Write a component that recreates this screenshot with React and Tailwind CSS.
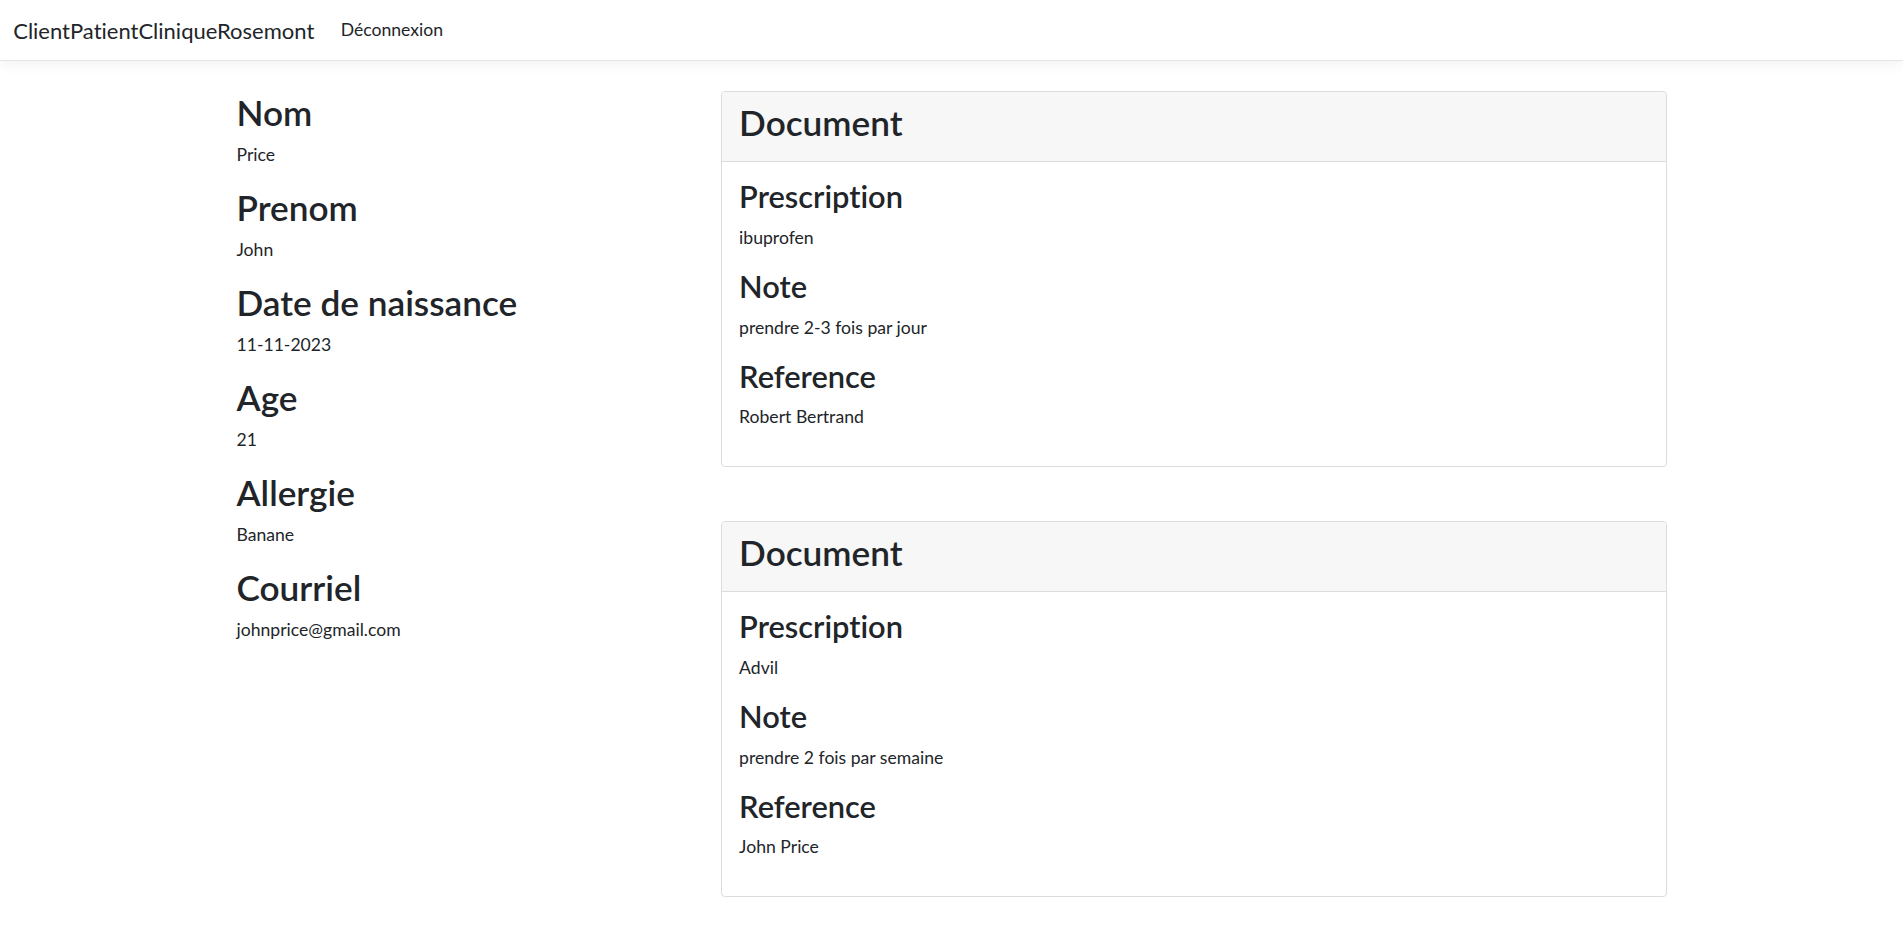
import React from 'react';

const patient = [
  { label: 'Nom', value: 'Price' },
  { label: 'Prenom', value: 'John' },
  { label: 'Date de naissance', value: '11-11-2023' },
  { label: 'Age', value: '21' },
  { label: 'Allergie', value: 'Banane' },
  { label: 'Courriel', value: 'johnprice@gmail.com' },
];

const documents = [
  { prescription: 'ibuprofen', note: 'prendre 2-3 fois par jour', reference: 'Robert Bertrand' },
  { prescription: 'Advil', note: 'prendre 2 fois par semaine', reference: 'John Price' },
];

const DocumentCard = ({ doc }) => (
  <div className="mb-[54px] rounded-[4px] border border-[#dcdcdc] bg-white">
    <div className="border-b border-[#dcdcdc] bg-[#f7f7f7] px-[17.6px] pt-[8.8px] pb-[8.8px] rounded-t-[4px]">
      <h2 className="mb-[8.8px] text-[35.2px] leading-[1.2] font-semibold">Document</h2>
    </div>
    <div className="p-[17.6px]">
      <h3 className="mb-[8.8px] text-[30.8px] leading-[1.2] font-semibold">Prescription</h3>
      <p className="mb-[17.6px] leading-[1.5]">{doc.prescription}</p>
      <h3 className="mb-[8.8px] text-[30.8px] leading-[1.2] font-semibold">Note</h3>
      <p className="mb-[17.6px] leading-[1.5]">{doc.note}</p>
      <h3 className="mb-[8.8px] text-[30.8px] leading-[1.2] font-semibold">Reference</h3>
      <p className="mb-[17.6px] leading-[1.5]">{doc.reference}</p>
    </div>
  </div>
);

const App = () => {
  return (
    <div
      className="min-h-screen bg-white text-[17.6px] text-[#212529] [font-variant-ligatures:none]"
      style={{ fontFamily: 'Lato, "Noto Sans", sans-serif' }}
    >
      {/* navbar */}
      <nav className="flex h-[61px] items-center border-b border-[#e5e5e5] bg-white px-[13.2px] shadow-[0_4px_13px_rgba(0,0,0,0.05)]">
        <span className="mr-[17.6px] text-[22px] text-[#212529]">ClientPatientCliniqueRosemont</span>
        <a className="px-[8.8px] text-[#212529]">Déconnexion</a>
      </nav>

      <div className="mx-auto mt-[30px] flex w-[1452px]">
        {/* patient info */}
        <div className="w-1/3 px-[11px]">
          {patient.map((item) => (
            <div key={item.label}>
              <h2 className="mb-[8.8px] text-[35.2px] leading-[1.2] font-semibold">{item.label}</h2>
              <p className="mb-[17.6px] leading-[1.5]">{item.value}</p>
            </div>
          ))}
        </div>

        {/* documents */}
        <div className="w-2/3 px-[11px]">
          {documents.map((doc, i) => (
            <DocumentCard key={i} doc={doc} />
          ))}
        </div>
      </div>
    </div>
  );
};

export default App;
